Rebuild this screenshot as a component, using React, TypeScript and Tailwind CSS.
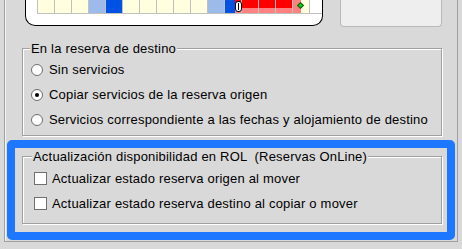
import React from 'react';

type Cell = 'y' | 'lb' | 'b' | 'r';

const cells: Cell[] = ['y', 'y', 'y', 'lb', 'b', 'y', 'y', 'y', 'y', 'y', 'lb', 'b', 'r', 'r', 'r', 'r'];

function GridCell({ kind, index }: { kind: Cell; index: number }) {
  if (index === 11) {
    return (
      <div className="flex w-[17px] h-full border-r border-[#c0c0c0]">
        <div className="w-[10px] h-full bg-[#0052e4]" />
        <div className="relative flex-1 h-full bg-[#ff8080]">
          <div className="h-[8px] bg-[#ff0000]" />
          <div className="absolute left-0 top-[1px] w-[7px] h-[11px] rounded-[3px] border border-black bg-white flex justify-center items-center">
            <div className="w-[1px] h-[7px] bg-black" />
          </div>
        </div>
      </div>
    );
  }
  if (index === 15) {
    return (
      <div className="relative flex w-[17px] h-full border-r border-[#c0c0c0]">
        <div className="w-[8px] h-full bg-[#ff8080]" />
        <div className="flex-1 h-full bg-[#ffffdf]" />
        <div className="absolute left-[5px] top-[3px] w-[5px] h-[5px] rotate-45 bg-[#00dd00] border border-[#205020]" />
      </div>
    );
  }
  if (kind === 'r') {
    return (
      <div className="w-[17px] h-full border-r border-[#c0c0c0] bg-[#ff8080]">
        <div className="h-[8px] bg-[#ff0000]" />
      </div>
    );
  }
  const bg = kind === 'y' ? 'bg-[#ffffdf]' : kind === 'lb' ? 'bg-[#9dbbea]' : 'bg-[#0052e4]';
  return <div className={`w-[17px] h-full border-r border-[#c0c0c0] ${bg}`} />;
}

function Radio({ checked, label }: { checked?: boolean; label: string }) {
  return (
    <div className="flex items-center h-[25px] pl-[8px]">
      <div className="w-[12px] h-[12px] rounded-full border border-[#6e6e6e] bg-white flex items-center justify-center">
        {checked && <div className="w-[4px] h-[4px] rounded-full bg-black" />}
      </div>
      <span className="ml-[6px]">{label}</span>
    </div>
  );
}

function Check({ label }: { label: string }) {
  return (
    <div className="flex items-center h-[25px] pl-[11px]">
      <div className="w-[13px] h-[13px] border border-[#707070] bg-white" />
      <span className="ml-[5px]">{label}</span>
    </div>
  );
}

export default function App() {
  return (
    <div className="w-[462px] h-[249px] overflow-hidden bg-[#d9d9d9] text-[13px] leading-[15px] tracking-[0.2px] text-black font-['Liberation_Sans',Arial,sans-serif]">
      <div className="ml-[4px] w-[454px] h-[242px] border-x border-b border-[#a0a0a0] shadow-[inset_1px_0_0_#f4f4f4]">
        {/* top area */}
        <div className="flex items-start h-[26px]">
          <div className="ml-[20px] w-[298px] h-[26px] bg-white border-x border-b border-black rounded-b-[10px]">
            <div className="ml-[11px] flex h-[14px] border-l border-b border-[#c0c0c0]">
              {cells.map((c, i) => (
                <GridCell key={i} kind={c} index={i} />
              ))}
            </div>
          </div>
          <div className="ml-[17px] w-[102px] h-[27px] bg-[#eeeeee] border-x border-b border-[#b9b9b9] rounded-b-[4px]" />
        </div>

        {/* group 1 */}
        <div className="relative mt-[22px] ml-[17px] w-[420px] h-[88px] border border-[#a0a0a0] shadow-[inset_1px_1px_0_#ffffff,1px_1px_0_#ffffff] pt-[8px]">
          <span className="absolute left-[7px] -top-[8px] px-[1px] bg-[#d9d9d9]">En la reserva de destino</span>
          <Radio label="Sin servicios" />
          <Radio checked label="Copiar servicios de la reserva origen" />
          <Radio label="Servicios correspondiente a las fechas y alojamiento de destino" />
        </div>

        {/* highlighted group 2 */}
        <div className="mt-[4px] ml-[2px] w-[448px] h-[100px] border-[8px] border-[#1e78ff] rounded-[5px]">
          <div className="relative mt-[8px] ml-[7px] w-[420px] h-[68px] border border-[#a0a0a0] shadow-[inset_1px_1px_0_#ffffff,1px_1px_0_#ffffff] pt-[9px]">
            <span className="absolute left-[9px] -top-[8px] px-[1px] bg-[#d9d9d9] whitespace-pre">
              {'Actualización disponibilidad en ROL  (Reservas OnLine)'}
            </span>
            <Check label="Actualizar estado reserva origen al mover" />
            <Check label="Actualizar estado reserva destino al copiar o mover" />
          </div>
        </div>
      </div>
    </div>
  );
}
